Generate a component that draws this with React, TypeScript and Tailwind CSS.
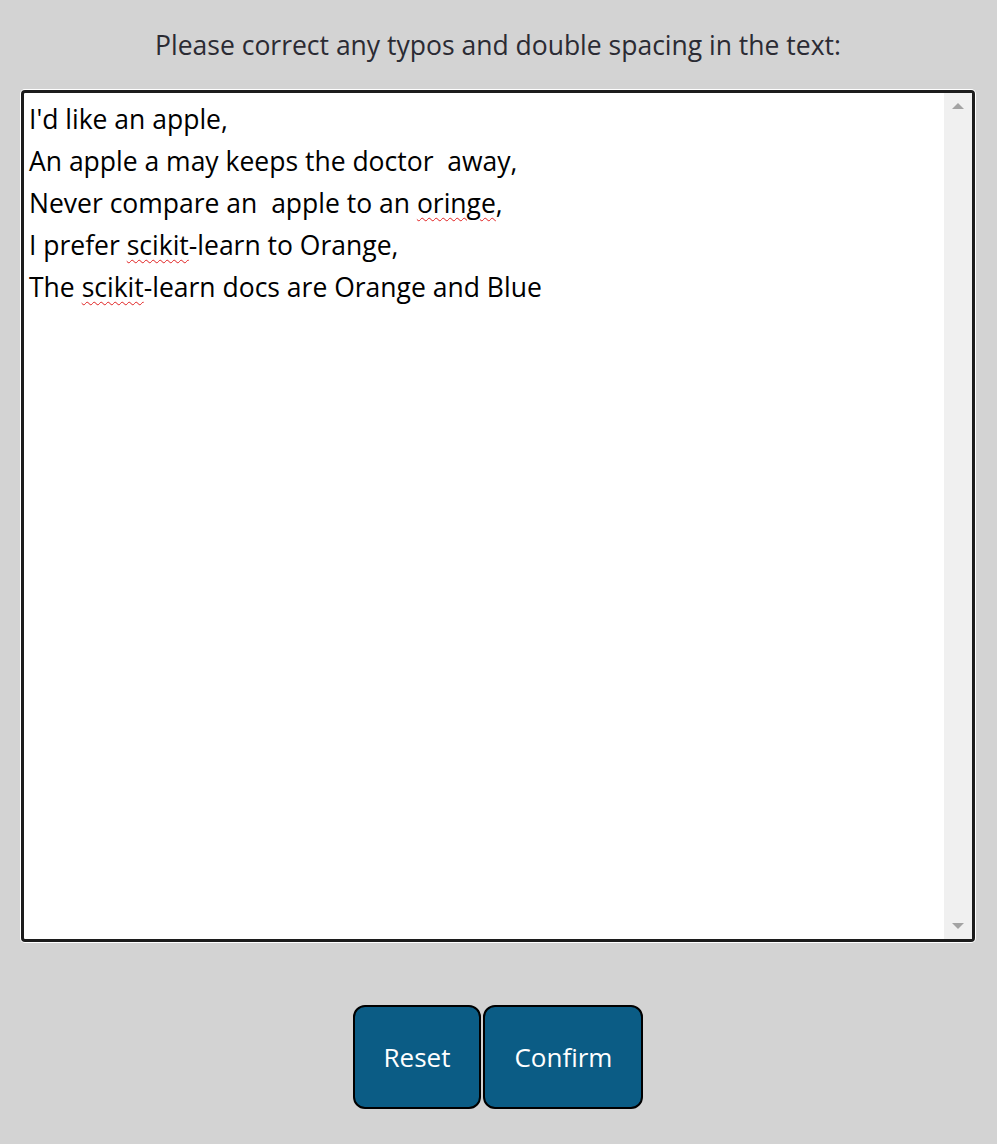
export default function App() {
  const lines = [
    <>I'd like an apple,</>,
    <>An apple a may keeps the doctor{'\u00a0\u00a0'}away,</>,
    <>
      Never compare an{'\u00a0\u00a0'}apple to an <Typo>oringe</Typo>,
    </>,
    <>
      I prefer <Typo>scikit</Typo>-learn to Orange,
    </>,
    <>
      The <Typo>scikit</Typo>-learn docs are Orange and Blue
    </>,
  ];

  return (
    <div
      className="min-h-screen bg-[#d3d3d3] pl-[21px] pr-[22px] pt-[26px]"
      style={{ fontFamily: '"Open Sans", "Noto Sans", sans-serif' }}
    >
      <p className="text-center text-[26.5px] leading-[38px] text-[#2b2b33]">
        Please correct any typos and double spacing in the text:
      </p>

      <div className="mt-[26px] h-[852px] rounded-[4px] bg-white shadow-[0_0_0_1px_#ffffff]">
        <div className="flex h-full rounded-[4px] border-[3px] border-[#1c1c1c]">
          <div className="flex-1 px-[5px] pt-[5px] text-[26.5px] leading-[42px] text-black">
            {lines.map((l, i) => (
              <div key={i} className="whitespace-pre">
                {l}
              </div>
            ))}
          </div>
          <div className="flex w-[28px] flex-col items-center justify-between bg-[#f0f0f0] py-[10px]">
            <div className="h-0 w-0 border-x-[6px] border-b-[6px] border-x-transparent border-b-[#a3a3a3]" />
            <div className="h-0 w-0 border-x-[6px] border-t-[6px] border-x-transparent border-t-[#a3a3a3]" />
          </div>
        </div>
      </div>

      <div className="mt-[63px] flex justify-center gap-[2px]">
        <button className="h-[104px] rounded-[12px] border-2 border-black bg-[#0b5c85] px-[29px] text-[26px] text-white">
          Reset
        </button>
        <button className="h-[104px] rounded-[12px] border-2 border-black bg-[#0b5c85] px-[29px] text-[26px] text-white">
          Confirm
        </button>
      </div>
    </div>
  );
}

function Typo({ children }: { children: React.ReactNode }) {
  return (
    <span className="underline decoration-[#e02020] decoration-wavy decoration-1 underline-offset-[4px]">
      {children}
    </span>
  );
}
